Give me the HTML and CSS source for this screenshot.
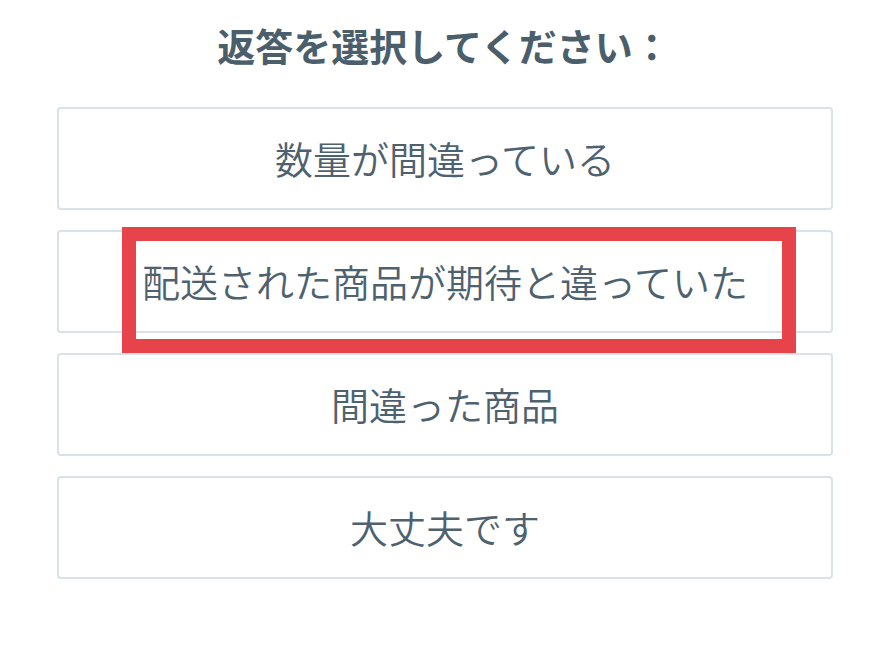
FILE: index.html
```html
<!DOCTYPE html>
<html lang="ja">
<head>
  <meta charset="UTF-8" />
  <meta name="viewport" content="width=device-width, initial-scale=1.0"/>
  <title>返答を選択</title>
  <link rel="stylesheet" href="styles.css">
</head>
<body>
  <div class="wrapper">
    <h1>返答を選択してください：</h1>
    <div class="choices">
      <button type="button">数量が間違っている</button>
      <button type="button">配送された商品が期待と違っていた</button>
      <button type="button">間違った商品</button>
      <button type="button">大丈夫です</button>
      <div class="highlight"></div>
    </div>
  </div>
</body>
</html>
```

FILE: styles.css
```css
body {
  margin: 0;
  background: #fff;
  font-family: "Noto Sans CJK JP", "Noto Sans", sans-serif;
}
.wrapper {
  padding: 20px 57px 0 57px;
}
h1 {
  margin: 0 0 37px 0;
  text-align: center;
  font-size: 38px;
  line-height: 50px;
  font-weight: 700;
  color: #4b5e6b;
  padding-right: 2px;
}
.choices {
  position: relative;
  display: flex;
  flex-direction: column;
  gap: 20px;
}
button {
  height: 103px;
  background: #fff;
  border: 2px solid #d8e2e8;
  border-radius: 4px;
  font-family: inherit;
  font-size: 38px;
  font-weight: 350;
  color: #4e616e;
  cursor: pointer;
  width: 100%;
  padding: 0 0 2px 0;
}
.highlight {
  position: absolute;
  left: 65px;
  top: 120px;
  width: 674px;
  height: 126px;
  box-sizing: border-box;
  border: 14px solid #e7434b;
}
```
